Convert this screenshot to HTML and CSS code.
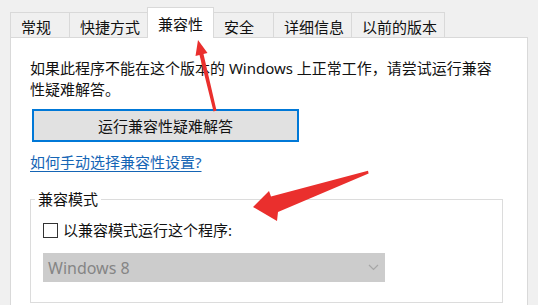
FILE: index.html
```html
<!DOCTYPE html>
<html lang="zh-CN">
<head>
    <meta charset="UTF-8">
    <title>属性 - 兼容性</title>
    <link rel="stylesheet" href="styles.css">
</head>
<body>

<div class="window">
    <div class="tabs">
        <div class="tab">常规</div>
        <div class="tab">快捷方式</div>
        <div class="tab active">兼容性</div>
        <div class="tab">安全</div>
        <div class="tab">详细信息</div>
        <div class="tab last">以前的版本</div>
    </div>

    <div class="panel">
        <p class="intro">如果此程序不能在这个版本的 Windows 上正常工作，请尝试运行兼容性疑难解答。</p>
        <button class="btn">运行兼容性疑难解答</button>
        <a class="link" href="#">如何手动选择兼容性设置?</a>

        <fieldset class="group">
            <legend>兼容模式</legend>
            <div class="check-row">
                <span class="checkbox"></span>
                <span>以兼容模式运行这个程序:</span>
            </div>
            <div class="dropdown">
                <span>Windows 8</span>
                <svg width="11" height="7" viewBox="0 0 11 7"><path d="M1 1 L5.5 5.5 L10 1" fill="none" stroke="#a6a6a6" stroke-width="1.2"/></svg>
            </div>
        </fieldset>
    </div>

    <!-- flèches rouges par-dessus la capture -->
    <svg class="arrows" width="538" height="305" viewBox="0 0 538 305">
        <polygon points="198,40 207.5,53 203.5,54 216.5,110.5 213.5,111.5 199.5,55 195.5,56" fill="#ea2f2d"/>
        <polygon points="253,207 269,191 271,196.5 368,170.8 368.6,173.6 278,212 277,221" fill="#ea2f2d"/>
    </svg>
</div>

</body>
</html>
```

FILE: styles.css
```css
body { margin: 0; background-color: #f0f0f0; font-family: "Noto Sans", "Noto Sans CJK SC", sans-serif; font-size: 15px; color: #111; }
.window { position: relative; height: 305px; overflow: hidden; }

.tabs { display: flex; align-items: flex-end; padding: 7px 0 0 10px; height: 30px; }
.tab {
    box-sizing: border-box;
    height: 25px;
    min-width: 59px;
    padding: 0 7px 0 10px;
    line-height: 29px;
    border: 1px solid #d9d9d9;
    border-right: none;
    border-bottom: none;
    background-color: #f0f0f0;
}
.tab.last { border-right: 1px solid #d9d9d9; }
.tab.active {
    position: relative;
    z-index: 1;
    height: 31px;
    margin-bottom: -1px;
    padding: 0 10px;
    line-height: 33px;
    border-right: 1px solid #d9d9d9;
    background-color: #fff;
}
.tab.active + .tab { border-left: none; }

.panel {
    height: 300px;
    margin: 0 10px;
    padding: 20px 24px 0 19px;
    background-color: #fff;
    border: 1px solid #d9d9d9;
}
.intro { margin: 0; line-height: 21px; }

.btn {
    display: block;
    width: 267px;
    height: 33px;
    margin: 9px 0 0 2px;
    border: 2px solid #0078d7;
    background-color: #e1e1e1;
    font: inherit;
    color: #111;
}

.link { display: block; margin-top: 10px; line-height: 21px; color: #1565b5; text-underline-offset: 3px; }

.group { margin: 16px 0 0; padding: 0 12px 20px; border: 1px solid #dcdcdc; min-width: 0; }
.group legend { margin-left: -8px; padding: 0 3px; line-height: 21px; }
.check-row { display: flex; align-items: center; gap: 5px; margin-top: 10px; line-height: 21px; }
.checkbox { box-sizing: border-box; width: 15px; height: 15px; border: 1px solid #333; background: #fff; }

.dropdown {
    box-sizing: border-box;
    display: flex;
    align-items: center;
    justify-content: space-between;
    width: 342px;
    height: 29px;
    margin-top: 12px;
    padding: 0 6px 0 5px;
    background-color: #cccccc;
    color: #858585;
    font-size: 16px;
}

.arrows { position: absolute; top: 0; left: 0; pointer-events: none; }
```
